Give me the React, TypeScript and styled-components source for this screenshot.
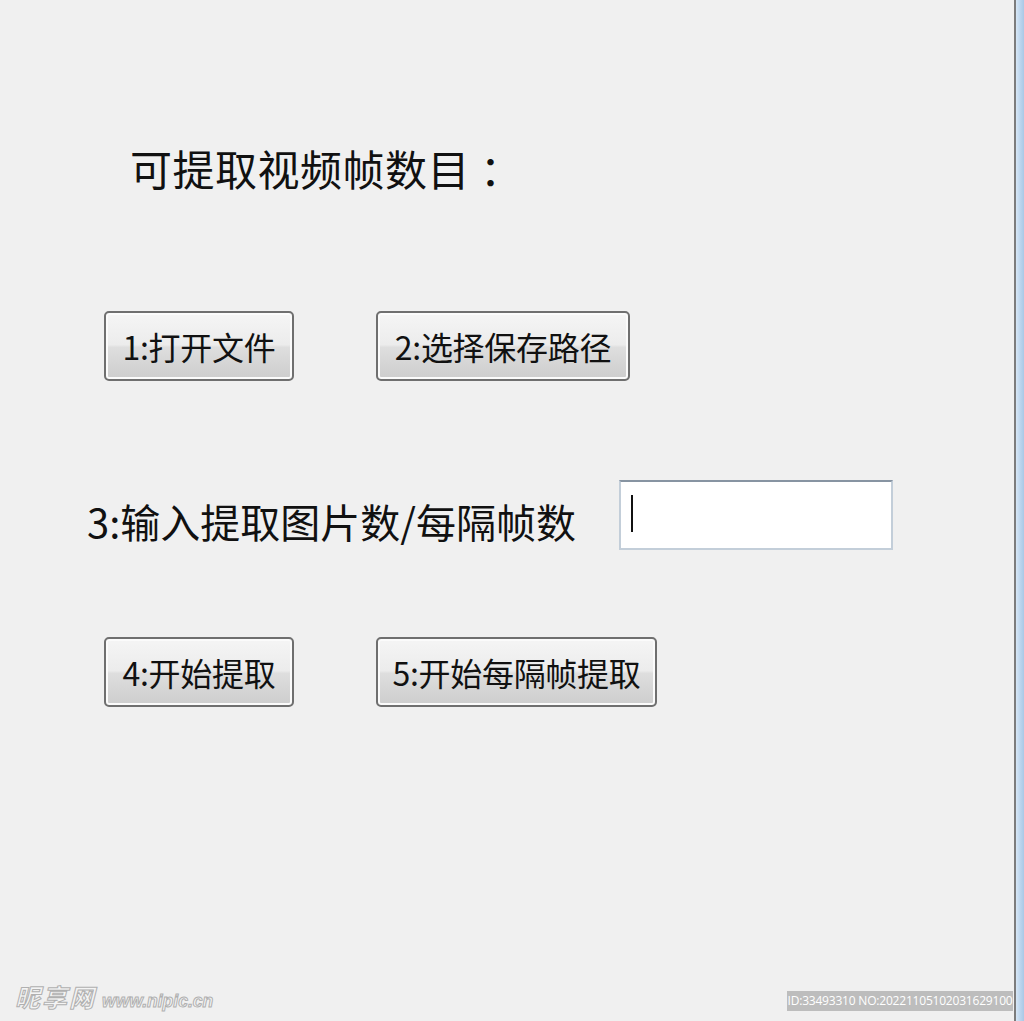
import React from "react";
import styled, { createGlobalStyle } from "styled-components";

const Global = createGlobalStyle`
  html, body { margin: 0; padding: 0; background: #f0f0f0; }
  body { font-family: "Noto Sans CJK SC", "Noto Sans", sans-serif; }
`;

const Window = styled.div`
  display: flex;
  width: 1024px;
  height: 1021px;
  background: #f0f0f0;
  overflow: hidden;
`;

const Content = styled.div`
  position: relative;
  flex: 1;
  display: flex;
  flex-direction: column;
  background: #f0f0f0;
`;

const EdgeLine = styled.div`
  width: 2px;
  background: #7c7c7c;
`;

const EdgeGlass = styled.div`
  width: 8px;
  background: linear-gradient(90deg, #d6e6f5, #b9d3ec 60%, #a9c8e6);
`;

const Title = styled.div`
  margin: 143px 0 0 130px;
  font-size: 42px;
  line-height: 50px;
  color: #111;
  letter-spacing: 0.5px;
`;

const Colon = styled.span`
  margin-left: 10px;
`;

const ButtonRow = styled.div<{ $top: number }>`
  display: flex;
  gap: 82px;
  margin: ${(p) => p.$top}px 0 0 104px;
`;

const Btn = styled.button<{ $w: number }>`
  box-sizing: border-box;
  width: ${(p) => p.$w}px;
  height: 70px;
  padding: 0;
  border: 2px solid #6f6f6f;
  border-radius: 5px;
  background: linear-gradient(#f5f5f5 0%, #ececec 48%, #dedede 52%, #cdcdcd 100%);
  box-shadow: inset 0 0 0 2px #fbfbfb;
  font-family: "Noto Sans CJK SC", "Noto Sans", sans-serif;
  font-size: 32px;
  line-height: 1;
  color: #111;
  display: flex;
  align-items: center;
  justify-content: center;
  letter-spacing: -0.3px;
`;

const InputRow = styled.div`
  display: flex;
  align-items: center;
  margin: 99px 0 0 87px;
`;

const Label = styled.div`
  font-size: 40px;
  line-height: 1;
  color: #111;
  width: 532px;
  padding-top: 12px;
  white-space: nowrap;
`;

const TextBox = styled.div`
  box-sizing: border-box;
  width: 274px;
  height: 70px;
  background: #fff;
  border: 2px solid #c3ced9;
  border-top-color: #8794a2;
  display: flex;
  align-items: center;
  padding-left: 10px;
`;

const Caret = styled.div`
  width: 2px;
  height: 37px;
  background: #111;
  margin-top: -4px;
`;

const WaterMark = styled.div`
  position: absolute;
  left: 15px;
  bottom: 7px;
  display: flex;
  align-items: baseline;
  gap: 6px;
  color: #f4f4f4;
  -webkit-text-stroke: 1px #b0b0b0;
  font-style: italic;
  font-weight: 700;
`;

const WmCn = styled.span`
  font-size: 25px;
  letter-spacing: 2px;
`;

const WmUrl = styled.span`
  font-family: "Liberation Sans", Arial, sans-serif;
  font-size: 17.5px;
`;

const IdTag = styled.div`
  position: absolute;
  right: 1px;
  bottom: 10px;
  width: 226px;
  height: 20px;
  background: #bdbdbd;
  color: #fff;
  font-family: "Open Sans", "Noto Sans", sans-serif;
  font-size: 12px;
  line-height: 20px;
  text-align: center;
  white-space: nowrap;
  letter-spacing: -0.2px;
`;

export default function App() {
  return (
    <Window>
      <Global />
      <Content>
        <Title>
          可提取视频帧数目<Colon>：</Colon>
        </Title>
        <ButtonRow $top={118}>
          <Btn $w={190}>1:打开文件</Btn>
          <Btn $w={254}>2:选择保存路径</Btn>
        </ButtonRow>
        <InputRow>
          <Label>3:输入提取图片数/每隔帧数</Label>
          <TextBox>
            <Caret />
          </TextBox>
        </InputRow>
        <ButtonRow $top={87}>
          <Btn $w={190}>4:开始提取</Btn>
          <Btn $w={281}>5:开始每隔帧提取</Btn>
        </ButtonRow>
        <WaterMark>
          <WmCn>昵享网</WmCn>
          <WmUrl>www.nipic.cn</WmUrl>
        </WaterMark>
        <IdTag>ID:33493310 NO:20221105102031629100</IdTag>
      </Content>
      <EdgeLine />
      <EdgeGlass />
    </Window>
  );
}
